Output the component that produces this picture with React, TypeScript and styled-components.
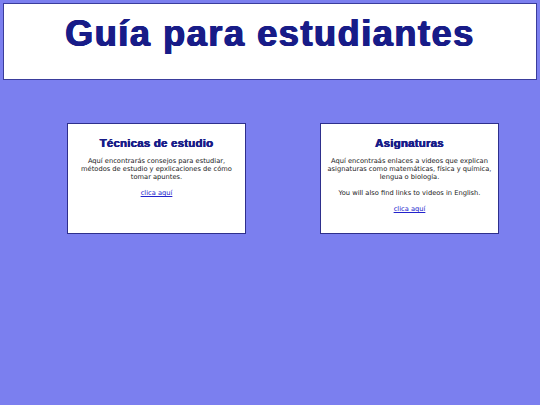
import React from "react";
import styled, { createGlobalStyle } from "styled-components";

const GlobalStyle = createGlobalStyle`
  html, body {
    margin: 0;
    padding: 0;
    background-color: #7b7fef;
  }
  body {
    font-family: "DejaVu Sans", Verdana, sans-serif;
  }
`;

// 전체 페이지
const Page = styled.div`
  width: 540px;
  min-height: 405px;
  padding: 3px;
  box-sizing: border-box;
`;

// 상단 헤더
const Header = styled.header`
  height: 77px;
  box-sizing: border-box;
  background-color: white;
  border: 1px solid #3a3d9c;
  padding-top: 12px;
  text-align: center;
`;

const Title = styled.h1`
  margin: 0;
  font-family: "Liberation Sans", Arial, sans-serif;
  font-weight: 700;
  font-size: 36px;
  line-height: 36px;
  color: #181c88;
  letter-spacing: 1.6px;
  text-shadow: 0.7px 0 0 #181c88, -0.7px 0 0 #181c88, 0 0.3px 0 #181c88;
`;

// 카드 영역
const CardRow = styled.div`
  display: flex;
  justify-content: space-between;
  padding: 0 38px 0 64px;
  margin-top: 43px;
`;

const Card = styled.section`
  width: 179px;
  height: 111px;
  box-sizing: border-box;
  background-color: white;
  border: 1px solid #2e2f8c;
  padding: 12px 5px 0;
  text-align: center;
`;

const CardTitle = styled.h2`
  margin: 0 0 7px;
  font-family: "Liberation Sans", Arial, sans-serif;
  font-weight: 700;
  font-size: 11.5px;
  line-height: 14px;
  color: #181c88;
  letter-spacing: 0.2px;
  text-shadow: 0.3px 0 0 #181c88, -0.3px 0 0 #181c88;
`;

const Text = styled.p`
  margin: 0 0 8px;
  font-size: 6.7px;
  line-height: 8px;
  color: #1a1a1a;
`;

const Link = styled.a`
  font-size: 6.7px;
  line-height: 8px;
  color: #2222cc;
  text-decoration: underline;
`;

function App() {
  return (
    <Page>
      <GlobalStyle />
      <Header>
        <Title>Guía para estudiantes</Title>
      </Header>
      <CardRow>
        <Card>
          <CardTitle>Técnicas de estudio</CardTitle>
          <Text>
            Aquí encontrarás consejos para estudiar, métodos de estudio y
            epxlicaciones de cómo tomar apuntes.
          </Text>
          <Text>
            <Link href="#">clica aquí</Link>
          </Text>
        </Card>
        <Card>
          <CardTitle>Asignaturas</CardTitle>
          <Text>
            Aquí encontraás enlaces a videos que explican asignaturas como
            matemáticas, física y química, lengua o biología.
          </Text>
          <Text>You will also find links to videos in English.</Text>
          <Text>
            <Link href="#">clica aquí</Link>
          </Text>
        </Card>
      </CardRow>
    </Page>
  );
}

export default App;
